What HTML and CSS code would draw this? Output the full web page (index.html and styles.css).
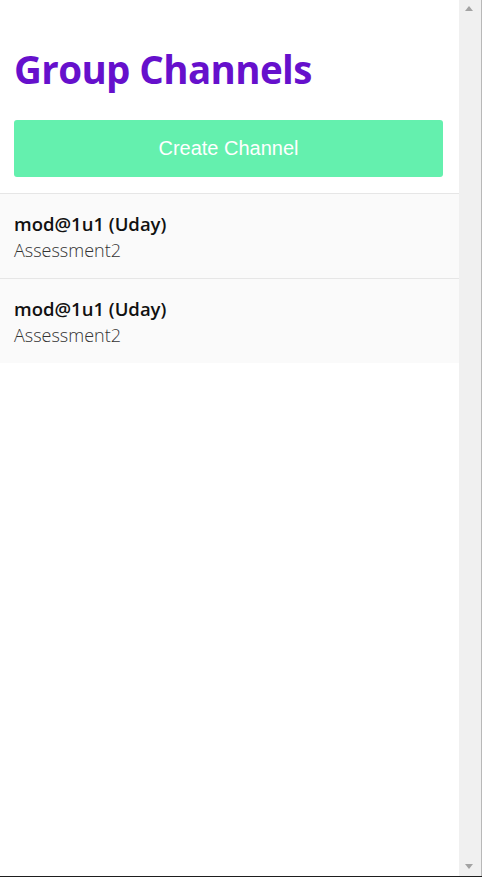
FILE: index.html
```html
<!DOCTYPE html>
<html>
<head>
<meta charset="utf-8">
<link rel="stylesheet" href="styles.css">
</head>
<body>
<div class="page">
  <main class="main">
    <h1 class="title">Group Channels</h1>
    <div class="actions">
      <button class="create-btn">Create Channel</button>
    </div>
    <ul class="channel-list">
      <li class="channel">
        <div class="channel-name">mod@1u1 (Uday)</div>
        <div class="channel-desc">Assessment2</div>
      </li>
      <li class="channel">
        <div class="channel-name">mod@1u1 (Uday)</div>
        <div class="channel-desc">Assessment2</div>
      </li>
    </ul>
  </main>
  <div class="scrollbar">
    <span class="arrow arrow-up"></span>
    <span class="arrow arrow-down"></span>
  </div>
</div>
</body>
</html>
```
FILE: styles.css
```css
html, body {
  margin: 0;
  padding: 0;
  background: #fff;
}
.page {
  display: flex;
  height: 877px;
  box-sizing: border-box;
  border-bottom: 1px solid #1e1e1e;
  overflow: hidden;
}
.main {
  flex: 1;
  min-width: 0;
  font-family: "Open Sans", "Noto Sans", sans-serif;
}
.title {
  margin: 0;
  padding: 43px 14px 0;
  height: 55px;
  font-size: 38.5px;
  line-height: 52px;
  font-weight: 700;
  color: #6610cc;
  letter-spacing: -0.6px;
}
.actions {
  padding: 22px 16px 16px 14px;
}
.create-btn {
  display: block;
  width: 100%;
  height: 57px;
  border: none;
  border-radius: 3px;
  background: #64f0ae;
  color: #fff;
  font-family: "Liberation Sans", Arial, sans-serif;
  font-size: 20px;
  cursor: pointer;
}
.channel-list {
  list-style: none;
  margin: 0;
  padding: 0;
}
.channel {
  background: #fafafa;
  border-top: 1px solid #e6e6e6;
  height: 85px;
  padding: 16px 14px 0;
  box-sizing: border-box;
}
.channel-name {
  font-size: 18.5px;
  font-weight: 600;
  color: #111;
  line-height: 27px;
}
.channel-desc {
  font-size: 18px;
  font-weight: 300;
  color: #333;
  line-height: 26px;
}
.scrollbar {
  width: 22px;
  flex: none;
  background: #f0f0f0;
  border-right: 1px solid #b8b8b8;
  position: relative;
}
.arrow {
  position: absolute;
  left: 6px;
  width: 0;
  height: 0;
  border-left: 4px solid transparent;
  border-right: 4px solid transparent;
}
.arrow-up {
  top: 6px;
  border-bottom: 5px solid #a3a3a3;
}
.arrow-down {
  bottom: 7px;
  border-top: 5px solid #a3a3a3;
}
```
